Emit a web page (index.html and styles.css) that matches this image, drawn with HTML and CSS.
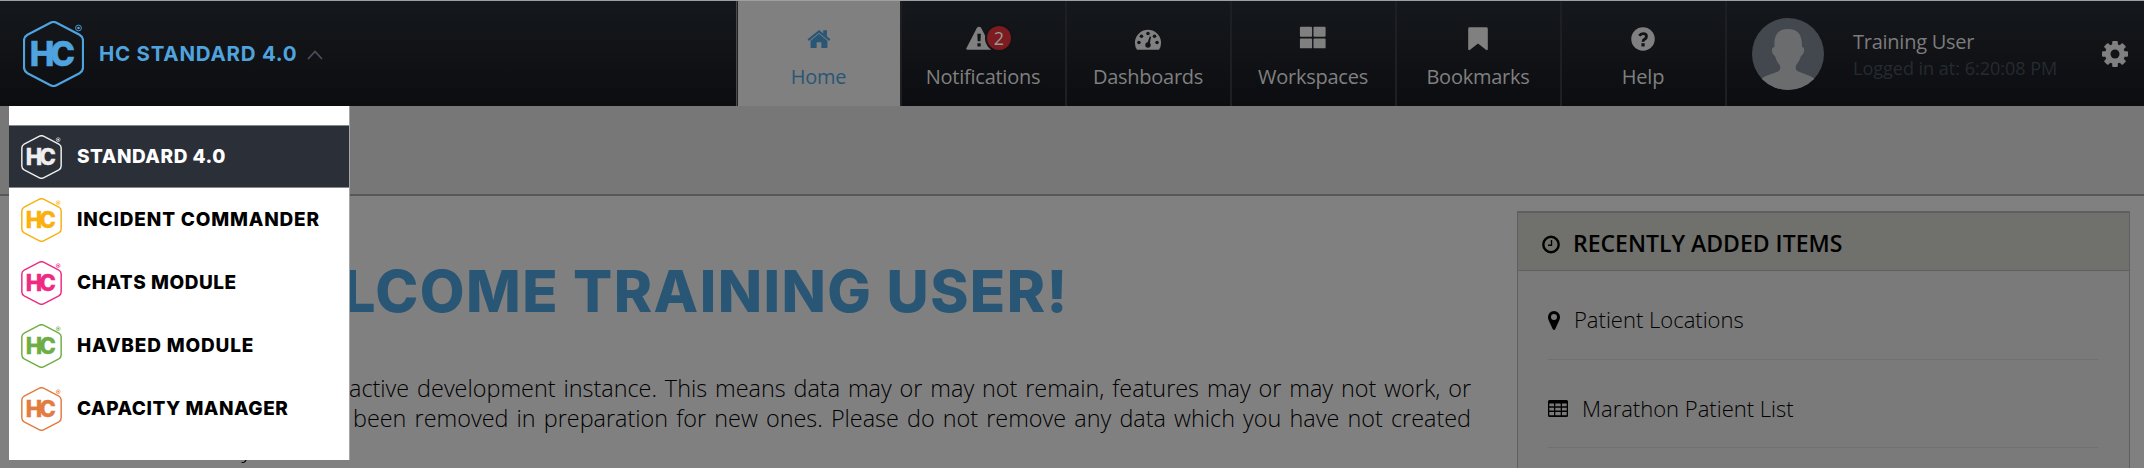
FILE: index.html
```html
<!DOCTYPE html>
<html lang="en">
<head>
<meta charset="utf-8">
<title>HC Standard 4.0</title>
<link rel="stylesheet" href="styles.css">
</head>
<body>
<svg class="defs" width="0" height="0" aria-hidden="true">
  <symbol id="hc" viewBox="0 0 61 66">
    <path d="M27.500 1.800Q30.500 .2 33.500 1.800L56.500 13.800Q60 15.800 60 19.500V46.500Q60 50.200 56.500 52.200L33.500 64.200Q30.500 65.800 27.500 64.200L4.500 52.200Q1 50.200 1 46.500V19.500Q1 15.800 4.500 13.800Z" fill="none" stroke="currentColor" stroke-width="2.200"/>
    <text transform="translate(6.800 45) scale(.97 1)" class="hc-text">HC</text>
    <circle cx="55.500" cy="7" r="2.900" fill="none" stroke="currentColor" stroke-width=".9"/>
    <circle cx="55.500" cy="7" r="1.300" fill="currentColor"/>
  </symbol>
</svg>
<header class="topbar">
  <div class="brand">
    <svg class="brand-logo"><use href="#hc"/></svg>
    <span class="brand-name">HC STANDARD 4.0</span>
    <svg class="chevron" viewBox="0 0 16 10"><path d="M1 9 8 1.500 15 9" fill="none" stroke="currentColor" stroke-width="1.700"/></svg>
  </div>
  <nav class="tabs">
    <a class="tab active"><svg class="icon" viewBox="0 0 30 30"><path d="M15 9.500 6 17V24.600H12.500V18.500H17.500V24.600H24V17Z" fill="currentColor"/><path d="M3.500 16.200 15 6.800 26.500 16.200" fill="none" stroke="currentColor" stroke-width="2.300"/><path d="M19.500 5.500H23.500V12.500L19.500 9.500Z" fill="currentColor"/></svg><span>Home</span></a>
    <a class="tab"><span class="alert"><svg class="icon" viewBox="0 0 30 30"><path d="M12.800 3Q15 .5 17.200 3L28.500 25Q28.800 26.600 27.500 26.600H2.500Q1.200 26.600 1.500 25Z" fill="currentColor"/><path d="M13.200 9.500H17L16.600 17.500H13.600ZM13.300 19.500H16.800V23H13.300Z" fill="#121317"/></svg><b class="badge">2</b></span><span>Notifications</span></a>
    <a class="tab"><svg class="icon" viewBox="0 0 30 30"><path d="M3.200 26.600A14 14 0 1 1 26.800 26.600Z" fill="currentColor"/><g fill="#121317"><circle cx="5.300" cy="18.700" r="1.900"/><circle cx="8" cy="12" r="1.900"/><circle cx="15" cy="9" r="1.900"/><circle cx="22" cy="12" r="1.900"/><circle cx="24.700" cy="18.700" r="1.900"/><circle cx="15" cy="21.500" r="2.900"/><path d="M13.800 21 16.800 12.200 18.300 12.600 16.600 21.500Z"/></g></svg><span>Dashboards</span></a>
    <a class="tab"><svg class="icon" viewBox="0 0 30 30" fill="currentColor"><rect x="1" y="2" width="13" height="10.500" rx="1"/><rect x="15.500" y="2" width="13" height="10.500" rx="1"/><rect x="1" y="14.500" width="13" height="10.500" rx="1"/><rect x="15.500" y="14.500" width="13" height="10.500" rx="1"/></svg><span>Workspaces</span></a>
    <a class="tab"><svg class="icon" viewBox="0 0 30 30"><path d="M6 2.500H24Q25.500 2.500 25.500 4V26Q25 27.600 23.500 26.600L15 19.800 6.500 26.600Q5 27.600 4.500 26V4Q4.500 2.500 6 2.500Z" fill="currentColor"/></svg><span>Bookmarks</span></a>
    <a class="tab"><svg class="icon" viewBox="0 0 30 30"><circle cx="15" cy="15" r="12.600" fill="currentColor"/><path d="M11 11.600Q12.500 9.200 15.200 9.200 18.700 9.200 18.700 12.200 18.700 14 16.700 15.200 15 16.200 15 18" fill="none" stroke="#121317" stroke-width="3"/><path d="M13.300 19.500H16.800V23H13.300Z" fill="#121317"/></svg><span>Help</span></a>
  </nav>
  <div class="user">
    <svg class="avatar" viewBox="0 0 72 72"><defs><clipPath id="face"><circle cx="36" cy="36" r="36"/></clipPath></defs><g clip-path="url(#face)"><path d="M0 0H72V72H0Z" fill="#43484f"/><path d="M36 11C46 11 50.500 17 50 29 53.500 29 52.500 36 49 38 47.500 43 45.500 45 44 47.500 43 53 45 53 50 55 58 58 62 59 66 64V76H6V64C10 59 14 58 22 55 27 53 29 53 28 47.500 26 45 24.500 43 23 38 19.500 36 18.500 29 22.500 29 21.500 17 26 11 36 11Z" fill="#6b6c6d"/></g></svg>
    <div class="who"><span class="who-name">Training User</span><span class="who-time">Logged in at: 6:20:08 PM</span></div>
    <svg class="gear" viewBox="0 0 26 26"><g fill="#808080"><circle cx="13" cy="13" r="10"/><g id="teeth"><rect x="10.200" y="0" width="5.600" height="26" rx="1"/><rect x="0" y="10.200" width="26" height="5.600" rx="1"/></g><use href="#teeth" transform="rotate(45 13 13)"/></g><circle cx="13" cy="13" r="4.500" fill="#121317"/></svg>
  </div>
</header>
<div class="subbar"></div>
<main class="content">
  <section class="welcome">
    <h1>WELCOME TRAINING USER!</h1>
    <div class="message">
      <p class="first">active development instance. This means data may or may not remain, features may or may not work, or</p>
      <p class="second">been removed in preparation for new ones. Please do not remove any data which you have not created</p>
      <p class="third">directly.</p>
    </div>
  </section>
  <aside class="panel">
    <h2><svg class="clock" viewBox="0 0 18 18" fill="none" stroke="currentColor"><circle cx="9" cy="9" r="7.700" stroke-width="2.400"/><path d="M9.500 4.500V9.700H6" stroke-width="1.400"/></svg><span>RECENTLY ADDED ITEMS</span></h2>
    <ul>
      <li><svg class="pin" viewBox="0 0 12 19"><path d="M6 0A6 6 0 0 1 12 6C12 8.500 11 9.500 7.300 18Q6 20 4.700 18C1 9.500 0 8.500 0 6A6 6 0 0 1 6 0ZM6 3A3 3 0 0 0 6 9 3 3 0 0 0 6 3Z" fill="currentColor" fill-rule="evenodd"/></svg><span>Patient Locations</span></li>
      <li><svg class="table" viewBox="0 0 20 17"><path d="M1.500 0H18.500Q20 0 20 1.500V15.500Q20 17 18.500 17H1.500Q0 17 0 15.500V1.500Q0 0 1.500 0ZM1.300 3.500V6.300H6V3.500ZM7.300 3.500V6.300H12.700V3.500ZM14 3.500V6.300H18.700V3.500ZM1.300 7.800V10.600H6V7.800ZM7.300 7.800V10.600H12.700V7.800ZM14 7.800V10.600H18.700V7.800ZM1.300 12.100V15.300H6V12.100ZM7.300 12.100V15.300H12.700V12.100ZM14 12.100V15.300H18.700V12.100Z" fill="currentColor" fill-rule="evenodd"/></svg><span>Marathon Patient List</span></li>
    </ul>
  </aside>
</main>
<div class="menu">
  <a class="item selected"><svg><use href="#hc"/></svg><span>STANDARD 4.0</span></a>
  <a class="item yellow"><svg><use href="#hc"/></svg><span class="wide">INCIDENT COMMANDER</span></a>
  <a class="item pink"><svg><use href="#hc"/></svg><span>CHATS MODULE</span></a>
  <a class="item green"><svg><use href="#hc"/></svg><span class="wide">HAVBED MODULE</span></a>
  <a class="item orange"><svg><use href="#hc"/></svg><span>CAPACITY MANAGER</span></a>
</div>
</body>
</html>
```
FILE: styles.css
```css
* { box-sizing: border-box; }
body { margin: 0; width: 2144px; height: 468px; overflow: hidden; background: #808080; font-family: "Open Sans", sans-serif; color: #000; display: flex; flex-direction: column; position: relative; }
.defs { position: absolute; }
.hc-text { font: 800 34px Inter, sans-serif; letter-spacing: -4px; fill: currentColor; stroke: currentColor; stroke-width: .5px; }
.topbar { height: 106px; flex: none; border-top: 1px solid #9ca1a3; background: linear-gradient(#15181c, #0c0d11); display: flex; }
.brand { width: 736px; padding-left: 23px; display: flex; align-items: center; color: #4fa3df; }
.brand-logo { width: 61px; height: 66px; margin-right: 15px; }
.brand-name { font: 700 20.500px Inter, sans-serif; letter-spacing: .75px; width: 208px; white-space: nowrap; }
.chevron { width: 16px; height: 10px; color: #4b515c; margin-top: 2px; }
.tabs { display: flex; border-left: 1px solid #4b4b4b; }
.tab { width: 165px; border-right: 2px solid #1d1f23; display: flex; flex-direction: column; align-items: center; padding: 24px 1px 0 0; color: #808080; font-size: 20px; line-height: 28px; }
.tab:first-child { border-left: 1px solid #222; }
.tab > span:last-child { margin-top: 10px; letter-spacing: -.25px; }
.tab.active { background: #808080; color: #2a5675; }
.icon { width: 28px; height: 28px; display: block; }
.alert { position: relative; height: 28px; margin-left: -8px; }
.badge { position: absolute; left: 22px; top: 1px; width: 24px; height: 24px; border-radius: 50%; background: #7c1c20; color: #999; font-weight: 400; font-size: 18px; line-height: 25px; text-align: center; box-shadow: 0 0 0 2px #121317; }
.user { flex: 1; display: flex; align-items: center; padding-left: 25px; }
.avatar { width: 72px; height: 72px; margin-right: 29px; }
.who { width: 249px; display: flex; flex-direction: column; line-height: 26px; padding-top: 2px; }
.who-name { font-size: 20px; color: #7c7c7c; letter-spacing: -.25px; }
.who-time { font-size: 18px; color: #252b30; }
.gear { width: 26px; height: 26px; }
.subbar { height: 90px; flex: none; background: #777; border-bottom: 2px solid #585858; }
.content { flex: 1; display: flex; }
.welcome { width: 1517px; padding-top: 60px; }
h1 { margin: 0 0 0 243px; font: 800 58px/70px Inter, sans-serif; letter-spacing: 1.430px; color: #2a5675; white-space: nowrap; }
.message { padding-top: 47px; font-size: 23.400px; line-height: 30px; font-weight: 300; }
.message p { margin: 0 0 0 349px; width: 1122px; text-align-last: justify; white-space: nowrap; }
.message .second { margin-left: 353px; width: 1118px; }
.message .third { margin-left: 176px; text-align-last: left; }
.panel { width: 613px; margin-top: 15px; border: 1px solid #5f5f5f; border-top-width: 2px; border-bottom: 0; background: #7a7a7a; }
h2 { margin: 0; height: 58px; background: #70706d; border-bottom: 1px solid #5f5f5f; padding: 2px 0 0 24px; display: flex; align-items: center; font-size: 23px; font-weight: 600; }
.clock { width: 18px; height: 19px; margin: 4px 13px 0 0; }
ul { margin: 0 31px 0 30px; padding: 0; list-style: none; }
li { height: 88.500px; border-bottom: 1px solid #707070; display: flex; align-items: center; font-size: 22px; font-weight: 300; padding-top: 10px; }
li:first-child { padding-top: 9px; }
.pin { width: 12px; height: 19px; margin: 2px 14px 0 0; }
.table { width: 20px; height: 17px; margin-right: 14px; }
.menu { position: absolute; left: 9px; top: 106px; width: 341px; height: 354px; background: #fff; border-right: 1px solid #a5a5a8; padding-top: 19px; }
.item { height: 63px; display: flex; align-items: center; padding-left: 12px; font: 800 19px Inter, sans-serif; letter-spacing: .53px; }
.item svg { width: 41px; height: 44px; margin-right: 15px; }
.item span { color: #000; white-space: nowrap; margin-top: -1px; }
.item .wide { letter-spacing: .82px; }
.selected { background: #2b2f38; color: #eee; border-top: 1px solid #85888d; border-bottom: 1px solid #85888d; }
.item.selected span { color: #fff; }
.yellow { color: #f9b010; }
.pink { color: #ee2a83; }
.green { color: #6fad46; }
.orange { color: #e27c40; }
```
